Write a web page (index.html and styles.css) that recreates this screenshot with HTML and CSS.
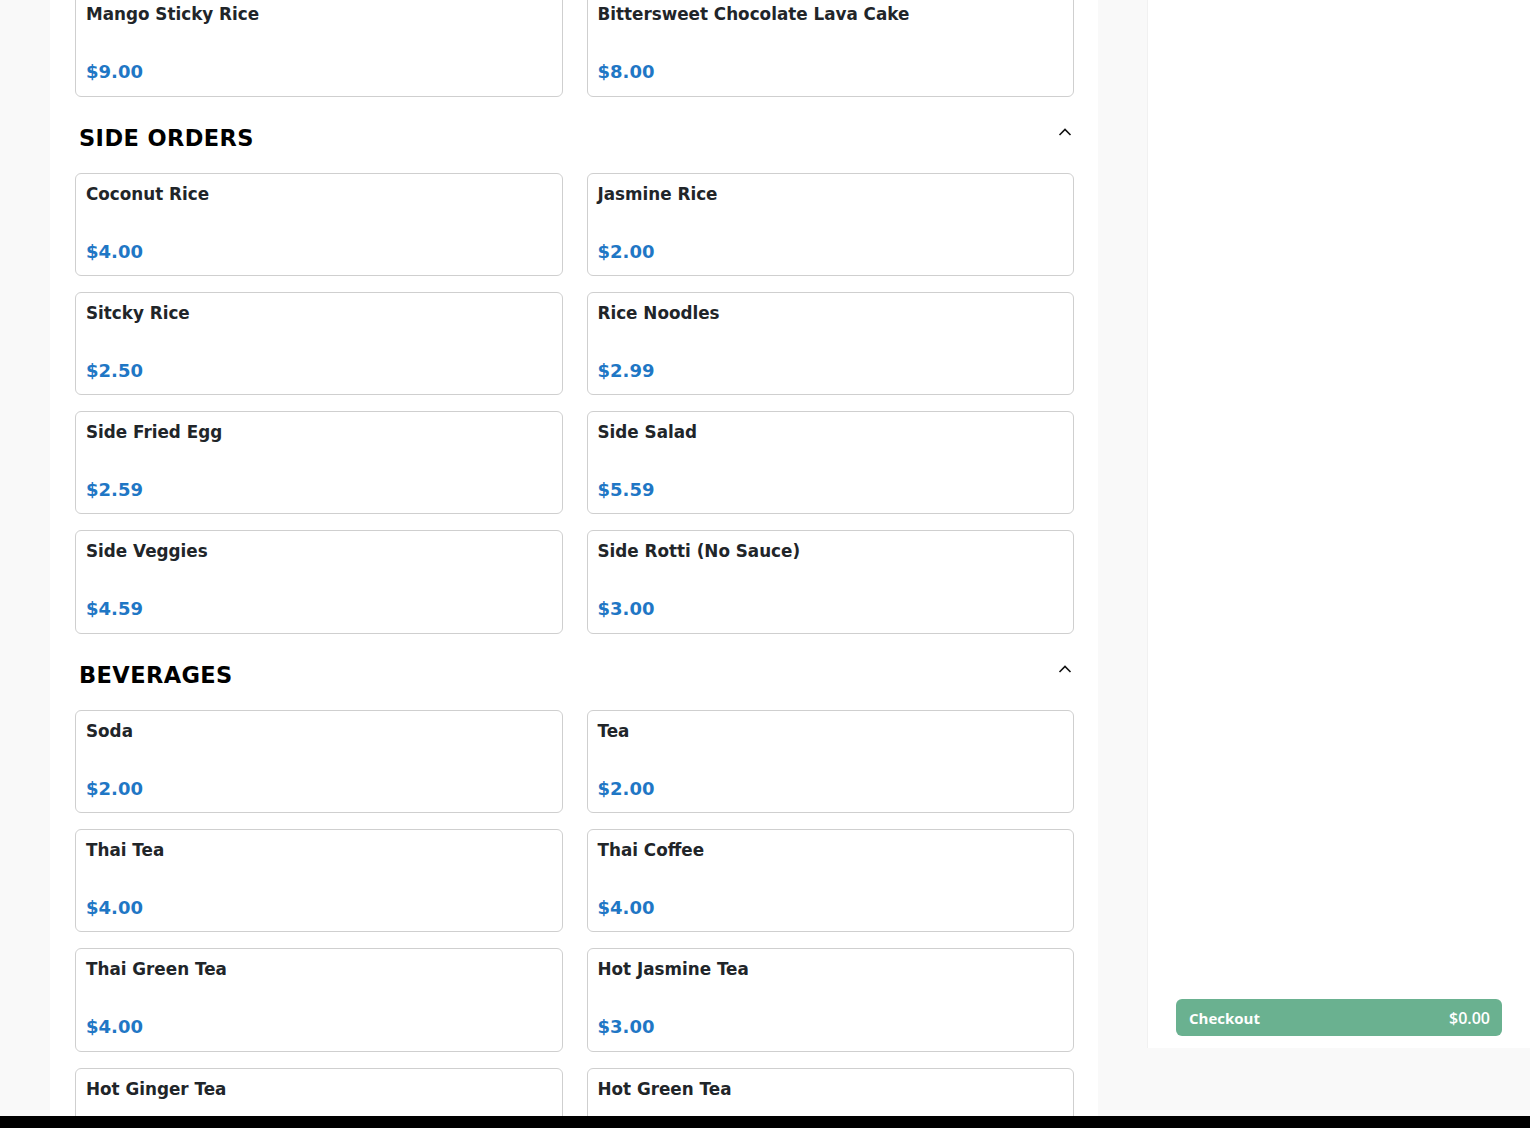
FILE: index.html
```html
<!DOCTYPE html>
<html>
<head>
<meta charset="utf-8">
<link rel="stylesheet" href="styles.css">
</head>
<body>
<div class="page">
  <main class="menu">
    <div class="menu-inner">
      <div class="grid">
        <div class="card"><div class="name">Mango Sticky Rice</div><div class="price">$9.00</div></div>
        <div class="card"><div class="name">Bittersweet Chocolate Lava Cake</div><div class="price">$8.00</div></div>
      </div>
      <div class="section-head">
        <h2>SIDE ORDERS</h2>
        <svg class="chev" viewBox="0 0 14 8" width="14" height="8"><path d="M1.5 7 L7 1.5 L12.5 7" fill="none" stroke="#111" stroke-width="1.6"/></svg>
      </div>
      <div class="grid">
        <div class="card"><div class="name">Coconut Rice</div><div class="price">$4.00</div></div>
        <div class="card"><div class="name">Jasmine Rice</div><div class="price">$2.00</div></div>
        <div class="card"><div class="name">Sitcky Rice</div><div class="price">$2.50</div></div>
        <div class="card"><div class="name">Rice Noodles</div><div class="price">$2.99</div></div>
        <div class="card"><div class="name">Side Fried Egg</div><div class="price">$2.59</div></div>
        <div class="card"><div class="name">Side Salad</div><div class="price">$5.59</div></div>
        <div class="card"><div class="name">Side Veggies</div><div class="price">$4.59</div></div>
        <div class="card"><div class="name">Side Rotti (No Sauce)</div><div class="price">$3.00</div></div>
      </div>
      <div class="section-head">
        <h2>BEVERAGES</h2>
        <svg class="chev" viewBox="0 0 14 8" width="14" height="8"><path d="M1.5 7 L7 1.5 L12.5 7" fill="none" stroke="#111" stroke-width="1.6"/></svg>
      </div>
      <div class="grid">
        <div class="card"><div class="name">Soda</div><div class="price">$2.00</div></div>
        <div class="card"><div class="name">Tea</div><div class="price">$2.00</div></div>
        <div class="card"><div class="name">Thai Tea</div><div class="price">$4.00</div></div>
        <div class="card"><div class="name">Thai Coffee</div><div class="price">$4.00</div></div>
        <div class="card"><div class="name">Thai Green Tea</div><div class="price">$4.00</div></div>
        <div class="card"><div class="name">Hot Jasmine Tea</div><div class="price">$3.00</div></div>
        <div class="card"><div class="name">Hot Ginger Tea</div><div class="price">$3.00</div></div>
        <div class="card"><div class="name">Hot Green Tea</div><div class="price">$3.00</div></div>
      </div>
    </div>
  </main>
  <aside class="cart">
    <button class="checkout"><span>Checkout</span><span class="total">$0.00</span></button>
  </aside>
</div>
<div class="bottom-bar"></div>
</body>
</html>
```
FILE: styles.css
```css
html, body {
  margin: 0;
  padding: 0;
  background: #f9f9f9;
  font-family: "DejaVu Sans", sans-serif;
  overflow: hidden;
  height: 1128px;
}
.page {
  display: flex;
  align-items: flex-start;
  gap: 49px;
  padding-left: 50px;
}
.menu {
  width: 1048px;
  box-sizing: border-box;
  background: #fff;
  padding: 0 24px 0 25px;
  height: 1128px;
  overflow: hidden;
}
.menu-inner {
  margin-top: -6.8px;
}
.grid {
  display: grid;
  grid-template-columns: 1fr 1fr;
  gap: 16px 24px;
}
.card {
  border: 1px solid #cfcfcf;
  border-radius: 6px;
  padding: 10px 10px 13.3px;
  background: #fff;
}
.name {
  font-size: 16.8px;
  line-height: 20px;
  font-weight: bold;
  color: #212529;
  margin-bottom: 37px;
}
.price {
  font-size: 18px;
  line-height: 21px;
  font-weight: bold;
  color: #1f77c5;
}
.section-head {
  display: flex;
  justify-content: space-between;
  align-items: center;
  padding: 28px 2px 21px 4px;
}
.section-head h2 {
  margin: 0;
  font-size: 22.5px;
  line-height: 27px;
  font-weight: bold;
  letter-spacing: 0.4px;
  color: #000;
}
.chev {
  margin-bottom: 12px;
}
.cart {
  flex: 1;
  height: 1048px;
  background: #fff;
  border-left: 1px solid #f1f1f1;
  display: flex;
  flex-direction: column;
  justify-content: flex-end;
  padding: 0 28px 12px;
  box-sizing: border-box;
}
.checkout {
  display: flex;
  justify-content: space-between;
  align-items: center;
  height: 37px;
  border: none;
  border-radius: 6px;
  background: #6ab190;
  color: #fff;
  font-family: "Open Sans", sans-serif;
  font-weight: bold;
  font-size: 15px;
  padding: 0 12px 0 13px;
}
.checkout .total {
  font-size: 16px;
  font-weight: 600;
}
.bottom-bar {
  position: fixed;
  left: 0;
  right: 0;
  bottom: 0;
  height: 12px;
  background: #000;
}
```
